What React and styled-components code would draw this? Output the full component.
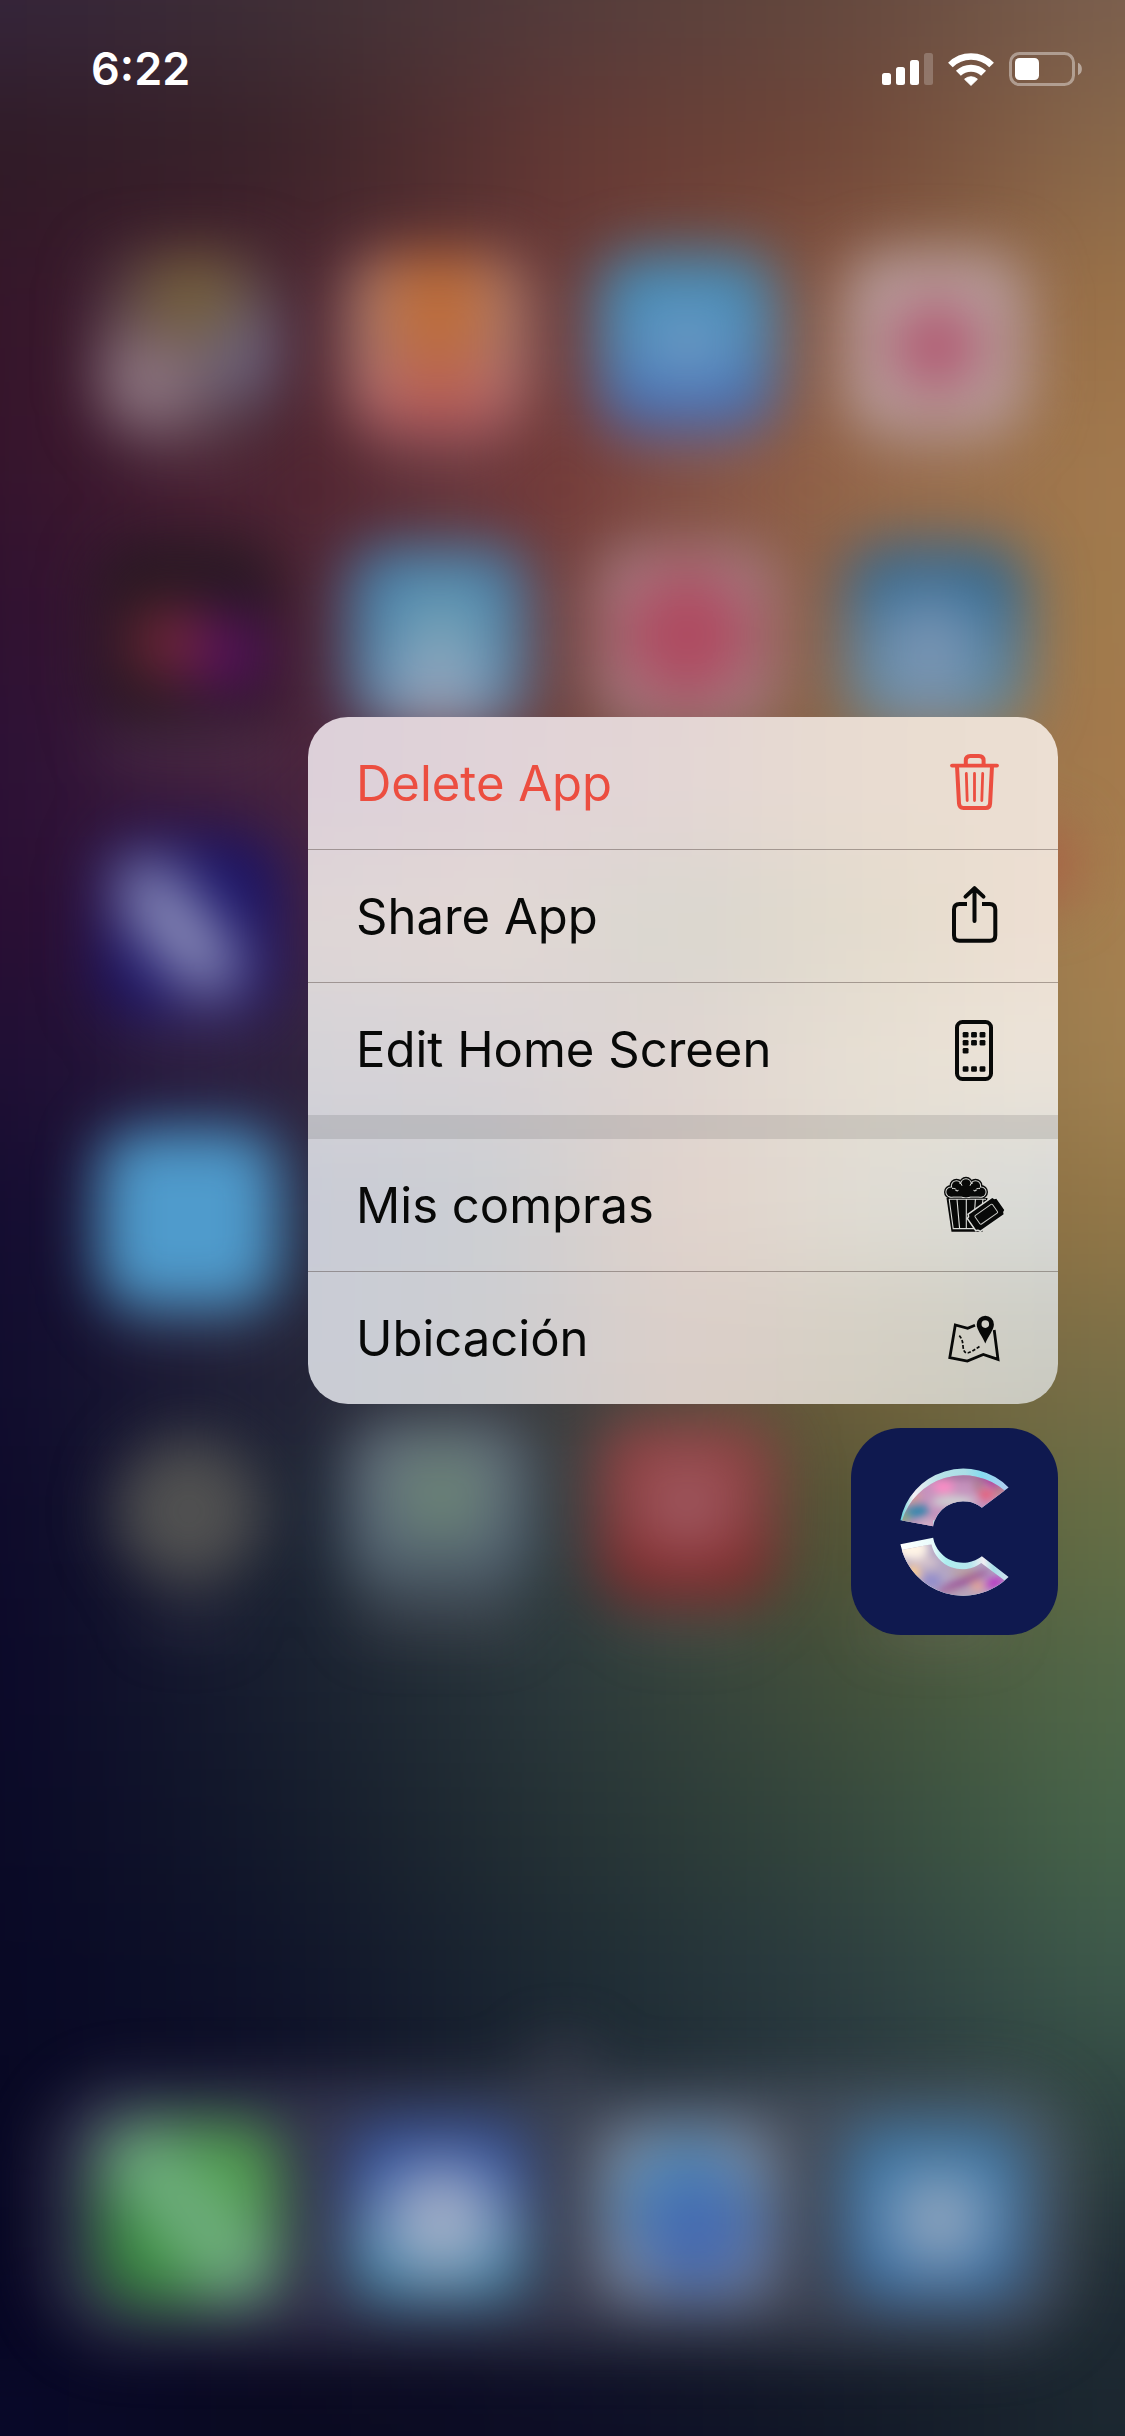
import React from "react";
import styled, { createGlobalStyle } from "styled-components";

const GlobalStyle = createGlobalStyle`
  *, *::before, *::after { box-sizing: border-box; }
  body { margin: 0; background: #0a0826; }
  button { font: inherit; border: 0; padding: 0; background: none; cursor: pointer; }
`;

/* ---------- colour fields ---------- */

const wallpaperRows = [
  ["#34243a", "#3f2f36", "#533b3b", "#64483e", "#7c604e"],
  ["#34243a", "#3f2f36", "#533b3b", "#64483e", "#7c604e"],
  ["#2f1a26", "#3a2229", "#643834", "#714738", "#8c6b4b"],
  ["#34152a", "#4a2430", "#6c3a38", "#8a5a44", "#9c7449"],
  ["#34132c", "#4e2431", "#753b3a", "#95674a", "#a27a4d"],
  ["#2e1030", "#4a2235", "#75403e", "#906548", "#a27d4d"],
  ["#2b1035", "#45203c", "#704440", "#8c6a4a", "#a67b4c"],
  ["#280d32", "#3c1f45", "#6e4540", "#88704a", "#a8804f"],
  ["#1e0d33", "#2b2040", "#5a4540", "#80653f", "#a38352"],
  ["#130b30", "#242440", "#50403c", "#80623c", "#937848"],
  ["#100b2d", "#222338", "#3f3d3f", "#70603a", "#7a7048"],
  ["#0d092a", "#1c2434", "#344044", "#565433", "#667046"],
  ["#0b0829", "#181f2f", "#2b393c", "#42503a", "#546a49"],
  ["#0a0927", "#131a2b", "#253235", "#35483d", "#48664a"],
  ["#080825", "#0f1329", "#1d2a33", "#2c3d40", "#3e5a4b"],
  ["#080824", "#0d0d26", "#1a2430", "#26343c", "#2e4340"],
  ["#070723", "#0c0a24", "#141828", "#1c2530", "#1f2c34"],
  ["#08082a", "#0a0a20", "#0c0c26", "#111726", "#1c2830"],
  ["#08082a", "#0a0a20", "#0c0c26", "#111726", "#1c2830"],
];

const menuRows = [
  ["#dbcfda", "#e0d2d9", "#e4d4d5", "#e9dcd0", "#ebdfd2"],
  ["#dcd0d9", "#e1d3d8", "#e3d6d4", "#e9dcd0", "#ecdfd3"],
  ["#ded6d6", "#e2d8d5", "#d9d6cf", "#e4dccd", "#eedfd3"],
  ["#d5d3d7", "#d8d3d6", "#dfd5d1", "#e7dfd3", "#ece4d9"],
  ["#c9cbd6", "#cccfd3", "#e2d3cb", "#e0ddd4", "#d8dad8"],
  ["#c9ccd6", "#cdced1", "#dccfc9", "#d5d0c4", "#cccdc5"],
  ["#cacbd2", "#cdcdd0", "#d9ccc5", "#d0cbbe", "#c4c4b8"],
];

const Field = styled.div`
  grid-area: 1 / 1;
  display: flex;
  flex-direction: column;
  margin: ${(p) => p.$bleed};
  filter: blur(${(p) => p.$blur});
`;

const Band = styled.div`
  flex: 1;
  background: linear-gradient(
    to right,
    ${(p) => p.$c[0]} 150px,
    ${(p) => p.$c[1]} calc(25% + 75px),
    ${(p) => p.$c[2]} 50%,
    ${(p) => p.$c[3]} calc(75% - 75px),
    ${(p) => p.$c[4]} calc(100% - 150px)
  );
`;

function ColorField({ rows, bleed, blur }) {
  return (
    <Field $bleed={bleed} $blur={blur} aria-hidden="true">
      {rows.map((c, i) => (
        <Band key={i} $c={c} />
      ))}
    </Field>
  );
}

/* ---------- layers ---------- */

const Screen = styled.div`
  display: grid;
  grid-template-columns: minmax(0, 1fr);
  min-height: 100vh;
  overflow: hidden;
  font-family: Inter, "Liberation Sans", sans-serif;
`;

const HomeScreen = styled.div`
  grid-area: 1 / 1;
  display: flex;
  flex-direction: column;
  padding: 253px 45px 91px;
  filter: blur(29px);
`;

const IconGrid = styled.div`
  display: grid;
  grid-template-columns: repeat(4, 1fr);
  justify-items: center;
  row-gap: 78px;
  padding: 0 19px;
`;

const Cell = styled.div`
  display: grid;
  justify-items: center;
  gap: 14px;
`;

const Tile = styled.div`
  position: relative;
  width: 180px;
  height: 180px;
  border-radius: 40px;
  background: ${(p) => p.$paint};
`;

const Badge = styled.span`
  position: absolute;
  top: -10px;
  right: -48px;
  width: 76px;
  height: 76px;
  border-radius: 50%;
  background: #ac5c44;
`;

const TileLabel = styled.div`
  width: ${(p) => p.$w || "130px"};
  height: 20px;
  border-radius: 10px;
  background: rgba(170, 150, 165, ${(p) => p.$a || 0.3});
`;

const PageDots = styled.div`
  align-self: center;
  width: 70px;
  height: 22px;
  margin-top: auto;
  margin-bottom: 14px;
  border-radius: 11px;
  background: rgba(150, 120, 150, 0.35);
`;

const Dock = styled.div`
  display: grid;
  grid-template-columns: repeat(4, 1fr);
  justify-items: center;
  padding: 42px 19px;
  border-radius: 80px;
  background: rgba(140, 140, 165, 0.3);
`;

const Overlay = styled.main`
  grid-area: 1 / 1;
  position: relative;
  display: flex;
  flex-direction: column;
`;

const StatusBar = styled.header`
  display: flex;
  align-items: center;
  justify-content: space-between;
  height: 138px;
  padding: 0 43px 0 91px;
  color: #fff;
`;

const Clock = styled.time`
  font-size: 45px;
  line-height: 56px;
  font-weight: 600;
`;

const StatusIcons = styled.div`
  display: flex;
  align-items: center;
  gap: 15px;
`;

const Focus = styled.section`
  display: flex;
  flex-direction: column;
  align-items: flex-end;
  gap: 24px;
  padding: 579px 67px 0;
`;

const Menu = styled.div`
  display: grid;
  width: 100%;
  max-width: 750px;
  overflow: hidden;
  border-radius: 40px;
`;

const MenuBody = styled.div`
  grid-area: 1 / 1;
  position: relative;
  display: flex;
  flex-direction: column;
`;

const MenuGroup = styled.div`
  & + & {
    border-top: 24px solid rgba(70, 65, 65, 0.15);
  }
`;

const MenuItem = styled.button`
  display: flex;
  align-items: center;
  justify-content: space-between;
  box-sizing: content-box;
  width: calc(100% - 96px);
  height: 132px;
  padding: 0 48px;
  color: ${(p) => (p.$danger ? "#ec4e40" : "#080908")};
  font-size: 49px;
  line-height: 64px;
  text-align: left;

  & + & {
    border-top: 1px solid rgba(60, 45, 40, 0.38);
  }
`;

const MenuLabel = styled.span`
  padding-top: 2px;
`;

const Glyph = styled.svg`
  flex: none;
  width: 72px;
  height: 72px;
`;

const AppIcon = styled.button`
  width: 207px;
  height: 207px;
  border-radius: 50px;
  background: #0f194f;
  overflow: hidden;

  svg {
    display: block;
    width: 100%;
    height: 100%;
  }
`;

/* ---------- status icons ---------- */

const Signal = () => (
  <svg width="51" height="32" viewBox="0 0 51 32" fill="#fff" aria-hidden="true">
    <rect x="0" y="20" width="9" height="12" rx="2.5" />
    <rect x="14" y="14" width="9" height="18" rx="2.5" />
    <rect x="28" y="7" width="9" height="25" rx="2.5" />
    <rect x="42" y="0" width="9" height="32" rx="2.5" opacity="0.22" />
  </svg>
);

const Wifi = () => (
  <svg width="46" height="33" viewBox="0 0 46 33" fill="none" stroke="#fff" aria-hidden="true">
    <path d="M2.4 12 A29.3 29.3 0 0 1 43.6 12" strokeWidth="6.6" />
    <path d="M10.4 20.3 A18 18 0 0 1 35.6 20.3" strokeWidth="7" />
    <path d="M23 32.4 L16.6 26.2 A9.6 9.6 0 0 1 29.4 26.2 Z" fill="#fff" strokeWidth="1" strokeLinejoin="round" />
  </svg>
);

const Battery = () => (
  <svg width="73" height="34" viewBox="0 0 73 34" fill="#fff" aria-hidden="true">
    <rect x="1.5" y="1.5" width="63" height="31" rx="9" fill="none" stroke="#fff" strokeWidth="3" opacity="0.4" />
    <rect x="6" y="6" width="24" height="22" rx="4.5" />
    <path d="M69 10.8 C74.2 13 74.2 21 69 23.2 Z" opacity="0.45" />
  </svg>
);

/* ---------- menu icons ---------- */

const TrashIcon = () => (
  <Glyph viewBox="38 27 72 72" fill="none" stroke="currentColor" strokeWidth="4" strokeLinecap="round" aria-hidden="true">
    <path d="M52 45.6 H97" strokeWidth="3.8" />
    <path d="M65.8 45 V40.5 Q65.8 36 70.3 36 H79 Q83.6 36 83.6 40.5 V45" />
    <path d="M57 46 L59 83.5 Q59.3 88 63.5 88 H85.7 Q89.8 88 90.1 83.5 L92 46" />
    <path d="M66.3 53.5 L67.2 80.5 M74.5 53.5 V80.5 M82.7 53.5 L81.8 80.5" strokeWidth="2.8" />
  </Glyph>
);

const ShareIcon = () => (
  <Glyph viewBox="38 160 72 72" fill="none" stroke="currentColor" strokeWidth="4" aria-hidden="true">
    <path d="M67 184 H59.5 Q54 184 54 189.5 V215.3 Q54 220.8 59.5 220.8 H89.8 Q95.3 220.8 95.3 215.3 V189.5 Q95.3 184 89.8 184 H82" />
    <path d="M74.5 169 V201 M65.5 176.6 L74.5 168.2 L83.5 176.6" strokeLinecap="round" strokeLinejoin="round" />
  </Glyph>
);

const dots = [
  [62.7, 312], [71.1, 312], [79.6, 312],
  [62.7, 320], [71.1, 320], [79.6, 320],
  [62.7, 328],
  [62.7, 346.2], [71.1, 346.2], [79.6, 346.2],
];

const PhoneIcon = () => (
  <Glyph viewBox="38 293 72 72" fill="currentColor" aria-hidden="true">
    <rect x="57" y="302" width="34" height="57" rx="5.5" fill="none" stroke="currentColor" strokeWidth="4" />
    {dots.map(([x, y]) => (
      <rect key={`${x}-${y}`} x={x} y={y} width="5.8" height="5.6" rx="1.3" />
    ))}
  </Glyph>
);

const kernels = [
  [51, 92, 7], [56.5, 85.8, 7], [66, 84, 7.2], [75.5, 85.8, 7], [81, 92, 7], [66, 90, 10],
];

const Kernels = ({ inset, fill }) => (
  <g fill={fill}>
    {kernels.map(([x, y, r]) => (
      <circle key={`${x}-${y}`} cx={x} cy={y} r={r - inset} />
    ))}
    <rect x={48 + inset} y="91" width={36 - inset * 2} height={8 - inset} />
  </g>
);

const PopcornIcon = () => (
  <Glyph viewBox="38 69 72 72" fill="currentColor" aria-hidden="true">
    <Kernels inset={0} fill="currentColor" />
    <Kernels inset={1.4} fill="#dcddd9" />
    <Kernels inset={2.4} fill="currentColor" />
    <path
      d="M52 88.6 q4 -1 5.2 3 M80 88.6 q-4 -1 -5.2 3 M59 82.8 q3 .6 3 3 M73 82.8 q-3 .6 -3 3"
      fill="none"
      stroke="#dcddd9"
      strokeWidth="1"
    />
    <path d="M46.5 98 H87.5 L82.5 131.7 H51.5 Z" />
    <path
      d="M49.2 99.2 H86 M49.2 99.2 L53.2 128.6 H80 M57 99.2 L59.6 128.6 M66.3 99.2 V128.6 M75.4 99.2 L73.4 128.6 M83 99.2 L81 115"
      fill="none"
      stroke="#dcddd9"
      strokeWidth="1.1"
    />
    <g transform="rotate(-35 86.2 114.3)">
      <path
        d="M72 104.5 H100.5 Q100.8 107 103.4 107.4 V121.2 Q100.8 121.6 100.5 124.2 H72 Q71.6 121.6 69 121.2 V107.4 Q71.6 107 72 104.5 Z"
        stroke="#dcddd9"
        strokeWidth="3"
        paintOrder="stroke"
      />
      <rect x="75.6" y="109" width="21.4" height="10.6" rx="1.2" fill="none" stroke="#c9cac6" strokeWidth="1" />
    </g>
  </Glyph>
);

const MapIcon = () => (
  <Glyph viewBox="38 202 72 72" fill="none" stroke="currentColor" strokeWidth="2.8" aria-hidden="true">
    <path d="M75 225.3 L67.7 228.3 L55.3 225 L49.8 257.6 L67.3 261 L83.3 254.5 L98 259.4 L94.2 230" />
    <path d="M59.3 235.7 Q62.8 239.5 63 246 Q63.4 253 67.5 253 Q70 253 81 245.5" strokeWidth="1.7" strokeDasharray="3.4 1.7" />
    <path
      d="M85.3 215.8 a8.6 8.6 0 0 1 8.6 8.6 c0 5 -5.2 11 -8.6 19 c-3.4 -8 -8.6 -14 -8.6 -19 a8.6 8.6 0 0 1 8.6 -8.6 Z M85.3 220.3 a3.8 3.8 0 1 0 0 7.6 a3.8 3.8 0 0 0 0 -7.6 Z"
      fill="currentColor"
      fillRule="evenodd"
      stroke="none"
    />
  </Glyph>
);

/* ---------- app logo ---------- */

const topArc = "M181 330 A192 192 0 0 1 505 232 L425 293 A91 91 0 0 0 279 348 Z";
const bottomArc = "M181 402 L279 383 A91 91 0 0 0 425 438 L505 500 A192 192 0 0 1 181 402 Z";

const Logo = () => (
  <svg viewBox="33 54 620 620" aria-hidden="true">
    <defs>
      <clipPath id="top"><path d={topArc} /></clipPath>
      <clipPath id="topInner" clipPath="url(#top)">
        <path d="M181 350 A192 192 0 0 1 505 252 L500 330 H279 V360 Z" />
      </clipPath>
      <clipPath id="bottom"><path d={bottomArc} /></clipPath>
      <clipPath id="bottomInner" clipPath="url(#bottom)">
        <path d="M160 424 L274 402 A94 94 0 0 0 423 458 L505 520 L440 600 H160 Z" />
      </clipPath>
      <linearGradient id="rimTop" x1="181" y1="0" x2="505" y2="0" gradientUnits="userSpaceOnUse">
        <stop offset="0" stopColor="#5fd0d8" />
        <stop offset="0.12" stopColor="#f4f0f4" />
        <stop offset="0.35" stopColor="#b8e2e8" />
        <stop offset="0.6" stopColor="#aadfe6" />
        <stop offset="0.75" stopColor="#86dcf0" />
        <stop offset="1" stopColor="#b4cdf0" />
      </linearGradient>
      <linearGradient id="rimBottom" x1="181" y1="0" x2="505" y2="0" gradientUnits="userSpaceOnUse">
        <stop offset="0" stopColor="#ffffff" />
        <stop offset="0.3" stopColor="#e8fbfb" />
        <stop offset="0.42" stopColor="#aeeef0" />
        <stop offset="0.65" stopColor="#b8e6ee" />
        <stop offset="0.77" stopColor="#f0eef2" />
        <stop offset="0.86" stopColor="#a8dfe8" />
        <stop offset="1" stopColor="#d4e0f0" />
      </linearGradient>
      <filter id="soft" x="-50%" y="-50%" width="200%" height="200%">
        <feGaussianBlur stdDeviation="12" />
      </filter>
    </defs>
    <path d={topArc} fill="url(#rimTop)" />
    <g clipPath="url(#topInner)">
      <rect x="160" y="150" width="360" height="220" fill="#c592bd" />
      <g filter="url(#soft)">
        <ellipse cx="370" cy="196" rx="90" ry="12" fill="#9c6c98" />
        <ellipse cx="215" cy="262" rx="26" ry="20" fill="#dc9c94" />
        <ellipse cx="310" cy="231" rx="32" ry="18" fill="#ff8cc6" />
        <ellipse cx="340" cy="274" rx="66" ry="16" fill="#cfd6d4" />
        <ellipse cx="230" cy="302" rx="36" ry="24" fill="#3787ad" />
        <ellipse cx="190" cy="322" rx="18" ry="18" fill="#7fae74" />
        <ellipse cx="262" cy="342" rx="30" ry="12" fill="#d9bccb" />
        <ellipse cx="455" cy="215" rx="44" ry="12" fill="#a8309a" transform="rotate(32 455 215)" />
        <ellipse cx="415" cy="225" rx="16" ry="18" fill="#a97a8c" />
        <ellipse cx="438" cy="254" rx="24" ry="16" fill="#ea5c74" />
        <ellipse cx="480" cy="245" rx="18" ry="14" fill="#b8847c" />
      </g>
    </g>
    <path d={bottomArc} fill="url(#rimBottom)" />
    <g clipPath="url(#bottomInner)">
      <rect x="160" y="380" width="360" height="200" fill="#b3a6c4" />
      <g filter="url(#soft)">
        <ellipse cx="215" cy="415" rx="50" ry="34" fill="#fff4e6" />
        <ellipse cx="260" cy="455" rx="34" ry="16" fill="#d6c4cc" />
        <ellipse cx="218" cy="488" rx="22" ry="24" fill="#ffcf90" />
        <ellipse cx="275" cy="512" rx="30" ry="20" fill="#928ccc" />
        <ellipse cx="372" cy="484" rx="44" ry="9" fill="#c0a294" />
        <ellipse cx="370" cy="514" rx="90" ry="13" fill="#9c4f94" transform="rotate(-24 370 514)" />
        <ellipse cx="365" cy="552" rx="50" ry="10" fill="#bba4b4" />
        <ellipse cx="415" cy="528" rx="24" ry="13" fill="#f0a68c" />
        <ellipse cx="462" cy="518" rx="34" ry="15" fill="#bb2cc4" transform="rotate(-20 462 518)" />
      </g>
    </g>
  </svg>
);

/* ---------- data ---------- */

const homeTiles = [
  {
    paint:
      "radial-gradient(circle at 52% 22%, #75603c 0 18%, transparent 42%), radial-gradient(circle at 24% 74%, #8c7480 0 18%, transparent 46%), radial-gradient(circle at 80% 52%, #6e6684 0 14%, transparent 42%), #513a44",
    a: 0.2,
  },
  { paint: "radial-gradient(ellipse at 50% 25%, #bd6c38 0 24%, transparent 62%), radial-gradient(circle at 50% 92%, #b85c62 0 20%, transparent 56%), #ae837e", a: 0.28 },
  { paint: "radial-gradient(circle at 50% 50%, #6e9ac4 0 14%, transparent 50%), linear-gradient(#3f8cb4, #4a8cbc 50%, #4660b0)", a: 0.22 },
  { paint: "radial-gradient(circle at 50% 52%, #b04e6a 0 22%, transparent 44%), #b8a0a0", a: 0.2 },
  { paint: "radial-gradient(circle at 38% 54%, #8c2c3e 0 10%, transparent 34%), radial-gradient(circle at 70% 60%, #5e0e6c 0 10%, transparent 36%), #241820", a: 0.26, w: "180px" },
  { paint: "radial-gradient(circle at 50% 88%, #98a8c0 0 14%, transparent 46%), radial-gradient(circle at 52% 50%, #6fa0b4 0 20%, transparent 60%), #4480ac" },
  { paint: "radial-gradient(circle at 50% 50%, #ae4a60 0 44%, transparent 60%), #a8828a" },
  { paint: "radial-gradient(ellipse at 46% 62%, #7c96b4 0 20%, transparent 62%), linear-gradient(#245e8a, #38749c 50%, #5c8ca0)" },
  { paint: "linear-gradient(50deg, transparent 22%, #9496c0 38% 58%, transparent 74%) 36% 50% / 66% 74% no-repeat, #1a1468", a: 0.2 },
  { paint: "transparent" },
  { paint: "transparent" },
  { paint: "transparent", badge: true },
  { paint: "#4f9bcc", a: 0.16, w: "150px" },
  { paint: "transparent" },
  { paint: "transparent" },
  { paint: "transparent" },
  { paint: "radial-gradient(circle at 50% 50%, #515151 0 50%, transparent 66%)", a: 0.16, w: "100px" },
  { paint: "radial-gradient(circle at 52% 42%, #6c8674 0 16%, transparent 44%), linear-gradient(#66727e, #5c6c7c 60%, #44525c)", a: 0.24, w: "170px" },
  { paint: "radial-gradient(circle at 50% 48%, #a05a62 0 18%, transparent 54%), linear-gradient(#964446, #883638 60%, #7e2022)", a: 0.18 },
  { paint: "transparent" },
];

const dockTiles = [
  "linear-gradient(48deg, transparent 28%, #70ae80 42% 56%, transparent 74%), linear-gradient(80deg, #2f8438, #58a650)",
  "radial-gradient(ellipse at 52% 54%, #a4b0c8 0 26%, transparent 54%), linear-gradient(#2a4898, #4668ac 40%, #5090b4 75%, #34789c)",
  "radial-gradient(circle at 56% 62%, #4468b0 0 22%, transparent 56%), radial-gradient(circle at 50% 46%, #4c8cb8 0 40%, transparent 62%), #868e9e",
  "radial-gradient(ellipse at 52% 54%, #98aac0 0 18%, transparent 48%), linear-gradient(#3c749e, #447cb0 50%, #386ca0)",
];

const menuGroups = [
  [
    { label: "Delete App", Icon: TrashIcon, danger: true },
    { label: "Share App", Icon: ShareIcon },
    { label: "Edit Home Screen", Icon: PhoneIcon },
  ],
  [
    { label: "Mis compras", Icon: PopcornIcon },
    { label: "Ubicación", Icon: MapIcon },
  ],
];

export default function App() {
  return (
    <Screen>
      <GlobalStyle />
      <ColorField rows={wallpaperRows} bleed="-228px -150px" blur="58px" />
      <HomeScreen aria-hidden="true">
        <IconGrid>
          {homeTiles.map((t, i) => (
            <Cell key={i}>
              <Tile $paint={t.paint}>{t.badge && <Badge />}</Tile>
              <TileLabel $w={t.w} $a={t.a} />
            </Cell>
          ))}
        </IconGrid>
        <PageDots />
        <Dock>
          {dockTiles.map((paint, i) => (
            <Tile key={i} $paint={paint} />
          ))}
        </Dock>
      </HomeScreen>
      <Overlay>
        <StatusBar>
          <Clock>6:22</Clock>
          <StatusIcons>
            <Signal />
            <Wifi />
            <Battery />
          </StatusIcons>
        </StatusBar>
        <Focus>
          <Menu role="menu">
            <ColorField rows={menuRows} bleed="-137px -150px" blur="44px" />
            <MenuBody>
              {menuGroups.map((items, g) => (
                <MenuGroup key={g} role="group">
                  {items.map(({ label, Icon, danger }) => (
                    <MenuItem key={label} type="button" role="menuitem" $danger={danger}>
                      <MenuLabel>{label}</MenuLabel>
                      <Icon />
                    </MenuItem>
                  ))}
                </MenuGroup>
              ))}
            </MenuBody>
          </Menu>
          <AppIcon type="button" aria-label="App">
            <Logo />
          </AppIcon>
        </Focus>
      </Overlay>
    </Screen>
  );
}
